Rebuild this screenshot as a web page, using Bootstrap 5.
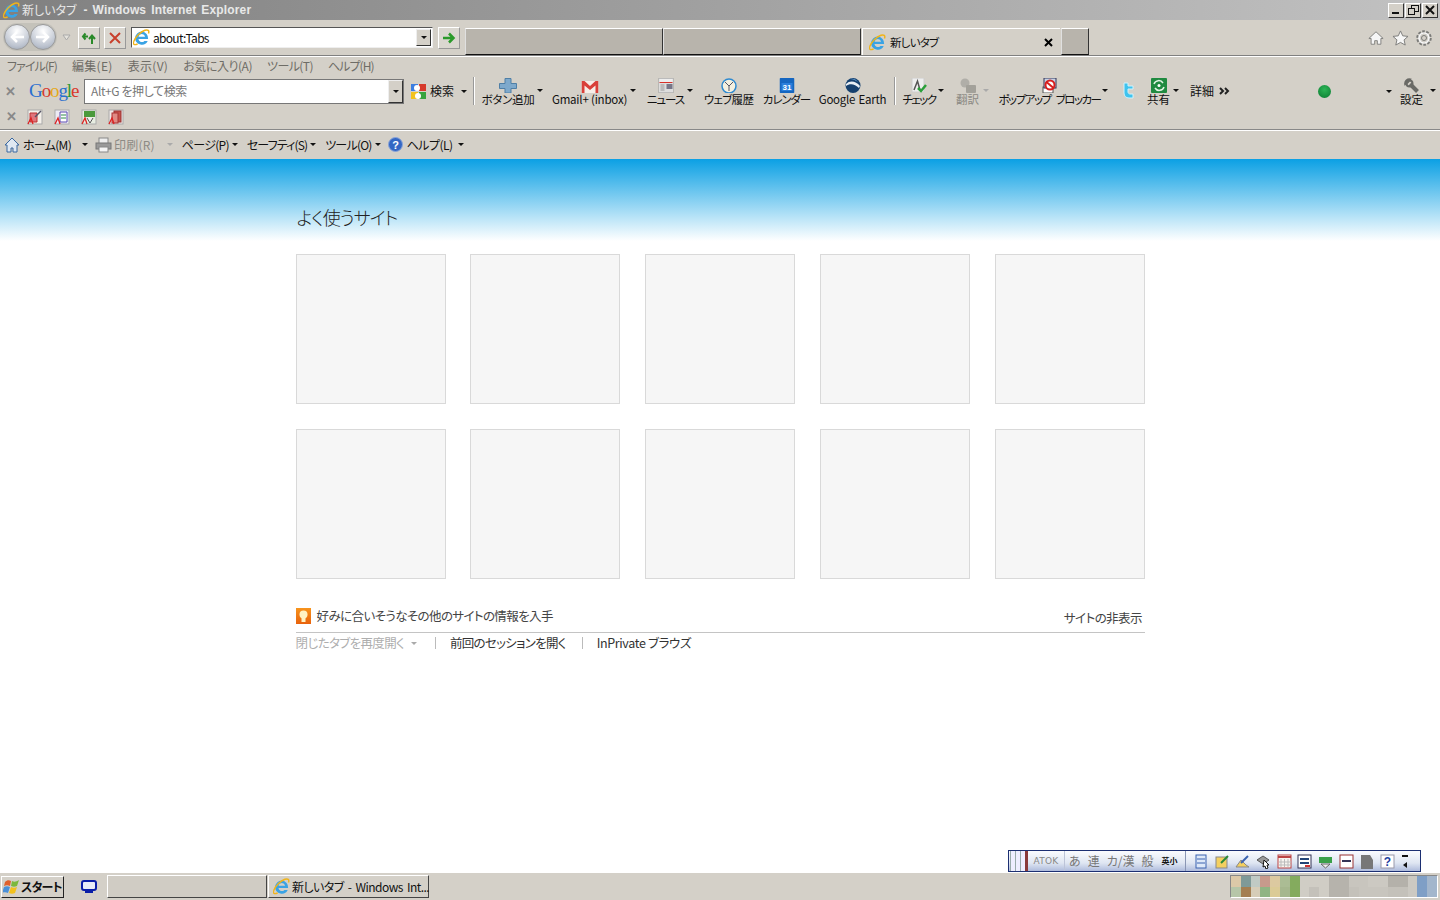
<!DOCTYPE html>
<html lang="ja"><head><meta charset="utf-8"><title>新しいタブ</title>
<link href="https://cdn.jsdelivr.net/npm/bootstrap@5.3.0/dist/css/bootstrap.min.css" rel="stylesheet">
<style>
html,body{height:100%;overflow:hidden}
body{width:1440px;height:900px;background:#fff;font-family:"Noto Sans CJK JP","Liberation Sans",sans-serif;font-feature-settings:"palt";font-size:12px;line-height:14px;color:#111;display:flex;flex-direction:column}
svg{display:block;flex:none}
.chrome{background:#d4d0c8}
.titlebar{height:20px;background:linear-gradient(90deg,#808080,#c2c2c2);color:#e8e8e8;padding-left:3px;gap:2px}
.titlebar b{font:bold 12px "Liberation Sans",sans-serif;letter-spacing:.15px;word-spacing:1.500px;white-space:pre;color:#e8e8e8}
.winbtns{margin-left:auto;margin-right:2px;gap:1px}
.winbtn{width:16px;height:15px;background:#d4d0c8;border:1px solid;border-color:#fff #333 #333 #fff;display:flex;align-items:center;justify-content:center}
.navrow{height:36px;padding-left:3px;border-bottom:1px solid #808080;position:relative}
.navcircles{width:54px;height:28px;margin-top:-1px;background:#c4c2ba;border-radius:14px;padding:1px}
.navball{width:26px;height:26px;border-radius:50%;border:1px solid #9a9a9a;background:radial-gradient(circle at 50% 25%,#fff,#bcc3cf 70%,#97a0ae);display:flex;align-items:center;justify-content:center}
.chev{margin-left:5px}
.sqbtn{width:22px;height:22px;border:1px solid;border-color:#fff #999 #999 #fff;background:#dad7d0;display:flex;align-items:center;justify-content:center}
.sq1{margin-left:7px}.sq2{margin-left:4px}.sq3{margin-left:5px}
.addr{width:302px;height:21px;margin-left:5px;background:#fff;border:1px solid;border-color:#555 #eee #eee #555;padding-left:1px;gap:3px;color:#111}
.addr span{letter-spacing:-.7px}
.ddbtn{margin-left:auto;width:15px;height:17px;margin-right:1px;background:#d4d0c8;border:1px solid;border-color:#eee #333 #333 #eee;display:flex;align-items:center;justify-content:center}
.tri{width:0;height:0;border-left:3px solid transparent;border-right:3px solid transparent;border-top:3px solid #111;flex:none}
.tri-g{border-top-color:#aaa}
.tabs{align-self:flex-end;margin-left:5px;height:27px}
.tabx{height:27px;background:#b8b4ac;border:1px solid;border-color:#fff #333 #111 #e0e0e0;width:198px}
.tabon{width:198px;height:27px;margin-left:1px;padding:0 7px 0 6px;gap:4px;background:#d4d0c8;border-top:1px solid #fff;border-left:1px solid #fff}
.tabon span{font-size:11.500px;letter-spacing:-.8px}
.tabnew{width:28px;margin-left:1px}
.rico{margin-left:auto;margin-right:8px;gap:7.500px;align-self:center}
.menurow{height:22px;padding-left:7px;border-top:1px solid #fff;color:#6e6c66;gap:15px;padding-top:2px}
.googlerow{height:26px;position:relative}
.xmark{width:10px;margin-left:5px;color:#888;font:bold 13px "Liberation Sans",sans-serif}
.glogo{margin-left:14px;width:50px;font:19px/24px "Liberation Serif",serif;letter-spacing:-1.100px}
.gb{color:#2a6fd0}.gr{color:#d8392c}.gy{color:#e6a91a}.gg{color:#2c9a3c}
.sbox{margin-left:5px;width:320px;height:25px;background:#fff;border:1px solid #777;padding-left:6px;color:#777}
.sbox span{letter-spacing:-.4px}
.sdd{margin-left:auto;width:15px;height:23px;background:#d4d0c8;border:1px solid;border-color:#eee #333 #333 #eee;display:flex;align-items:center;justify-content:center}
.gicon{margin-left:6px}
.gsearch{margin-left:3px;white-space:nowrap}
.gtri{margin-left:7px}
.sep{width:2px;height:28px;background:#999;border-right:1px solid #fff;flex:none}
.sep1{margin-left:6px}.sep2{margin-left:8px}
.tb{position:relative;height:26px;flex:none;text-align:center;white-space:nowrap}
.tb svg{position:absolute;left:50%;top:0;transform:translateX(-50%)}
.tb span{position:absolute;left:-15px;right:-15px;top:14px;line-height:14px;font-size:11.500px}
.tb .tri{position:absolute;top:11px;right:-9px}
.dim{color:#8c8a84}
.b-add{width:52px;margin-left:7px}.b-add span{letter-spacing:-.3px}
.b-gm{width:75px;margin-left:18px}.b-gm span{letter-spacing:-.2px}
.b-nw{width:37px;margin-left:20px}.b-nw span{letter-spacing:-1px}
.b-wh{width:49px;margin-left:20px}.b-wh span{letter-spacing:-.7px}
.b-cal{width:47px;margin-left:10px}.b-cal span{letter-spacing:-1.100px}
.b-ge{width:67px;margin-left:9px}.b-ge span{letter-spacing:-.25px;word-spacing:1px}
.b-ck{width:32px;margin-left:7px}.b-ck span{letter-spacing:-1.500px}
.b-tr{width:25px;margin-left:20px}
.b-pp{width:99px;margin-left:20px}.b-pp span{letter-spacing:-1.500px;word-spacing:4px}
.b-tw{width:16px;margin-left:21px}
.b-sh{width:23px;margin-left:11px}
.b-st{width:23px;margin-left:8px}.b-st .tri{right:-13px}
.more{margin-left:20px;gap:5px}
.greenwrap{margin-left:88px;width:13px;height:13px;border-radius:50%;background:radial-gradient(circle at 50% 35%,#2cb456,#0a7a30);flex:none}
.gearTri{margin-left:55px}
.linksrow{height:26px;border-bottom:1px solid #888;gap:11px}
.linksrow .xmark{margin-left:6px}
.cmdrow{height:29px;border-top:1px solid #fff;padding-left:4px;padding-bottom:1px}
.cmd{white-space:nowrap}
.m-hm{margin-left:3px;letter-spacing:-.7px}.m-a1{margin-left:11px}.m-pr{margin-left:7px}.m-g{margin-left:2px;letter-spacing:.2px}.m-a2{margin-left:12px}
.m-pg{margin-left:9px;letter-spacing:-.7px}.m-a{margin-left:3px}.m-sf{margin-left:9px;letter-spacing:-.85px}.m-tl{margin-left:9px;letter-spacing:-.8px}.m-hp{margin-left:4px;letter-spacing:-.5px}.m-qi{margin-left:7px}.m-a3{margin-left:5px}
.mm1{letter-spacing:-.9px}.mm2{letter-spacing:.3px}.mm3{letter-spacing:.3px}.mm4{letter-spacing:-.45px}.mm5{letter-spacing:-.6px}.mm6{letter-spacing:-.9px}
.page{flex:1;position:relative;background:linear-gradient(#0ba0e4,#fff);background-repeat:no-repeat;background-size:100% 82px}
.wrap{width:849.400px;margin-left:295.600px}
.head{font-size:18px;line-height:24px;letter-spacing:-1px;font-weight:300;color:#222;padding-top:46px;padding-left:1px;height:95px}
.tilegrid{display:grid;grid-template-columns:repeat(5,150px);column-gap:24.750px;row-gap:25px}
.tile{height:150px;background:#f6f6f6;border:1px solid #d9d9d9}
.sugg{margin-top:29px;height:25px;border-bottom:1px solid #c4c4c4;color:#444;font-size:12.500px;letter-spacing:-.6px}
.sugg-t{margin-top:1px}
.bulb{width:15px;height:16px;background:linear-gradient(#f7941d,#e8620c);margin-right:6px;display:flex;align-items:center;justify-content:center}
.hide{margin-left:auto;margin-right:3px;margin-top:3px;letter-spacing:-.55px}
.actions{height:20px;font-size:12.500px;color:#333}
.act-off{color:#aeaeae;letter-spacing:-.65px}
.act-tri{margin-left:7px}
.act-a{letter-spacing:-.7px}.act-b{letter-spacing:-.35px}
.vsep{width:1px;height:12px;background:#bbb;margin:0 14px 0 18px}
.vsep2{margin:0 14px 0 16px}
.atokwrap{padding-right:19px;justify-content:flex-end;position:absolute;right:0;bottom:0;left:0}
.atok{width:413px;height:22px;background:linear-gradient(#fafbfe,#dfe6f2 60%,#aebbdc);border:1px solid #1c2f72;color:#778;font-size:12px}
.gripa{width:18px;height:20px;margin-left:1px;background:repeating-linear-gradient(90deg,#9aa 0,#9aa 1px,#eef 1px,#eef 5px);border-right:3px solid #8a3a3a}
.atoklab{font:9px "DejaVu Sans",sans-serif;width:37px;text-align:center;letter-spacing:.3px;color:#888;border-right:1px solid #bcc4d8;height:20px;line-height:20px;flex:none}
.kana{padding-left:4px;gap:7px;width:121px;color:#777;height:20px;align-items:center;border-right:1px solid #8a96b4;flex:none}
.kana b{font-size:8px;color:#111;font-weight:700;white-space:nowrap;margin-left:1px}
.kana span{white-space:nowrap}
.tray{gap:5.700px;padding-left:8px}
.ti{width:15px;height:15px;flex:none}
.taskbar{height:28px;border-top:1px solid #fff;padding-left:1px;background:#d4d0c8}
.startbtn{width:63px;height:22px;font-weight:700;border:1px solid;border-color:#fff #222 #222 #fff;gap:0;padding-left:1px;white-space:nowrap;letter-spacing:-.8px}
.qlaunch{margin-left:17px;margin-right:10px}
.tbtn{height:23px;border:1px solid;border-color:#fff #444 #444 #fff}
.tbtn-a{width:160px;margin-right:1px;background:#d0ccc4}
.tbtn-b{width:161px;padding-left:4px;gap:2px;letter-spacing:-.55px;word-spacing:2px}
.tray2{margin-left:auto;margin-right:2px;width:208px;height:23px;border:1px solid;border-color:#888 #fff #fff #888;display:grid;grid-template-columns:repeat(21,1fr);grid-template-rows:repeat(2,1fr)}
</style></head><body>
<svg width="0" height="0" class="position-absolute"><defs>
<symbol id="ie" viewBox="0 0 20 20"><path d="M10.500 3a8 8 0 0 0-8 8 7.800 7.800 0 0 0 14.800 3h-3.900a4 4 0 0 1-7-2.200h11.400A8 8 0 0 0 10.500 3zM6.500 9a4 4 0 0 1 7.800 0z" fill="#3aa3e4"/><path d="M5.500 17.500C1.500 19.500-.5 18 1 14.500 3 9.500 8.500 3.500 14 1.500c3.500-1.200 5.500.3 4.200 3.800" fill="none" stroke="#f0b41a" stroke-width="1.700"/></symbol>
</defs></svg>

<div class="chrome">
 <div class="titlebar d-flex align-items-center">
  <svg width="17" height="17"><use href="#ie"/></svg>
  <span class="text-nowrap">新しいタブ</span><b> - Windows Internet Explorer</b>
  <div class="winbtns d-flex">
   <div class="winbtn"><svg width="10" height="10"><rect x="1" y="7" width="7" height="2" fill="#111"/></svg></div>
   <div class="winbtn"><svg width="11" height="10" fill="none" stroke="#111"><rect x="3.500" y=".5" width="7" height="6"/><rect x=".5" y="3.500" width="6" height="6" fill="#d4d0c8"/></svg></div>
   <div class="winbtn"><svg width="10" height="10" stroke="#111" stroke-width="2"><path d="M1 1l8 8M9 1L1 9"/></svg></div>
  </div>
 </div>

 <div class="navrow d-flex align-items-center">
  <div class="navcircles d-flex">
   <div class="navball"><svg width="16" height="14" fill="none" stroke="#fff" stroke-width="2.500"><path d="M15 7H3M8 2L3 7l5 5"/></svg></div>
   <div class="navball"><svg width="16" height="14" fill="none" stroke="#fff" stroke-width="2.500"><path d="M1 7h12M8 2l5 5-5 5"/></svg></div>
  </div>
  <svg class="chev" width="9" height="7" fill="#e4e2dc" stroke="#aaa"><path d="M1 1h7L4.500 6z"/></svg>
  <div class="sqbtn sq1"><svg width="16" height="14" stroke="#2a8a2a" stroke-width="2" fill="none"><path d="M2 5.500h5M4.500 2.500L2 5.500l2.500 3M11 13V6M8 8L11 4.500l3 3.500"/></svg></div>
  <div class="sqbtn sq2"><svg width="12" height="12" stroke="#c8402c" stroke-width="2"><path d="M1 1l10 10M11 1L1 11"/></svg></div>
  <div class="addr d-flex align-items-center">
   <svg width="17" height="17"><use href="#ie"/></svg><span>about:Tabs</span>
   <div class="ddbtn"><i class="tri"></i></div>
  </div>
  <div class="sqbtn sq3"><svg width="14" height="12" fill="none" stroke="#2a9a2a" stroke-width="2.500"><path d="M1 6h10M7 1.500L11.500 6 7 10.500"/></svg></div>
  <div class="tabs d-flex">
   <div class="tabx"></div><div class="tabx"></div>
   <div class="tabon d-flex align-items-center"><svg width="17" height="17"><use href="#ie"/></svg><span>新しいタブ</span><svg class="ms-auto" width="9" height="9" stroke="#000" stroke-width="2"><path d="M1 1l7 7M8 1L1 8"/></svg></div>
   <div class="tabx tabnew"></div>
  </div>
  <div class="rico d-flex align-items-center">
   <svg width="16" height="16" fill="#f6f6f6" stroke="#7a7a78" viewBox="0 0 18 16"><path d="M9 1L1 8.500h2.500V15h4v-4h3v4h4V8.500H17z"/></svg>
   <svg width="17" height="16" fill="#f6f6f6" stroke="#7a7a78" viewBox="0 0 18 17"><path d="M9 1l2.400 5.200 5.600.6-4.200 3.700 1.200 5.500L9 13.200 4 16l1.200-5.500L1 6.800l5.600-.6z"/></svg>
   <svg width="16" height="16" viewBox="0 0 16 16" fill="none"><circle cx="8" cy="8" r="6" stroke="#7a7a78" stroke-width="3.500" stroke-dasharray="2.400 1.300"/><circle cx="8" cy="8" r="5" stroke="#f6f6f6" stroke-width="1.700"/><circle cx="8" cy="8" r="2.500" stroke="#7a7a78"/></svg>
  </div>
 </div>

 <div class="menurow d-flex"><span class="mm1">ファイル(F)</span><span class="mm2">編集(E)</span><span class="mm3">表示(V)</span><span class="mm4">お気に入り(A)</span><span class="mm5">ツール(T)</span><span class="mm6">ヘルプ(H)</span></div>

 <div class="googlerow d-flex align-items-center">
  <span class="xmark">✕</span>
  <span class="glogo"><span class="gb">G</span><span class="gr">o</span><span class="gy">o</span><span class="gb">g</span><span class="gg">l</span><span class="gr">e</span></span>
  <div class="sbox d-flex align-items-center"><span>Alt+G を押して検索</span><div class="sdd"><i class="tri"></i></div></div>
  <svg class="gicon" width="17" height="17"><rect x="1" y="1" width="7" height="7" fill="#3b7de0"/><rect x="9" y="1" width="7" height="7" fill="#d63a2c"/><rect x="1" y="9" width="7" height="7" fill="#f2c21e"/><rect x="9" y="9" width="7" height="7" fill="#37a33f"/><circle cx="7" cy="5" r="3" fill="#fff"/><circle cx="8" cy="13" r="3" fill="#fff"/></svg>
  <span class="gsearch">検索</span><i class="tri gtri"></i>
  <div class="sep sep1"></div>

  <div class="tb b-add"><svg width="18" height="15"><path d="M6 .5h6v5h5.500v5H12V15H6v-4.500H.5v-5H6z" fill="#7ea9cc" stroke="#4f7fa6"/></svg><span>ボタン追加</span><i class="tri"></i></div>
  <div class="tb b-gm"><svg width="17" height="13" style="top:3px"><rect width="17" height="12" fill="#f6eee8"/><path d="M0 0h3l5.500 5L14 0h3v12h-3V4.500L8.500 9 3 4.500V12H0z" fill="#d9403a"/></svg><span>Gmail+ (inbox)</span><i class="tri"></i></div>
  <div class="tb b-nw"><svg width="15" height="15"><rect width="15" height="15" fill="#ddd" stroke="#999"/><rect x="1" y="1" width="13" height="3" fill="#eee"/><rect x="1" y="4" width="13" height="1" fill="#d8322a"/><rect x="8" y="6" width="6" height="5" fill="#778"/><rect x="2" y="6" width="4" height="7" fill="#bbb"/></svg><span>ニュース</span><i class="tri"></i></div>
  <div class="tb b-wh"><svg width="16" height="15"><circle cx="8" cy="8" r="7" fill="#f4f0e0" stroke="#2f8ad0" stroke-width="1.500"/><path d="M4 4l4 4 4-4M8 8v5" fill="none" stroke="#556"/></svg><span>ウェブ履歴</span></div>
  <div class="tb b-cal"><svg width="15" height="15"><rect width="15" height="15" rx="1" fill="#1566c0"/><rect x="2" y="5" width="11" height="8" fill="#2a7fdc"/><text x="7.500" y="12" font-size="8" font-weight="700" text-anchor="middle" fill="#fff" font-family="Liberation Sans">31</text></svg><span>カレンダー</span></div>
  <div class="tb b-ge"><svg width="16" height="15"><circle cx="8" cy="7.500" r="7.500" fill="#16406e"/><path d="M1 6C5 2 11 3 15 8l-1 2C10 6 5 5 1 8z" fill="#e8eef4"/><path d="M5 1c3-1 6 0 8 3-3-2-5-3-8-3z" fill="#6aa4d8"/></svg><span>Google Earth</span></div>
  <div class="sep sep2"></div>
  <div class="tb b-ck"><svg width="16" height="15"><rect x="1" width="12" height="14" fill="#eee" stroke="#ccc"/><path d="M3 12L6.500 3 9 12" fill="none" stroke="#555" stroke-width="1.500"/><path d="M7 10l3 3 5-6" fill="none" stroke="#2aa03a" stroke-width="2.500"/></svg><span>チェック</span><i class="tri"></i></div>
  <div class="tb b-tr dim"><svg width="16" height="15"><circle cx="5" cy="5" r="4.500" fill="#b0aea8"/><rect x="6" y="7" width="10" height="8" rx="1" fill="#a3a19a"/></svg><span>翻訳</span><i class="tri tri-g"></i></div>
  <div class="tb b-pp"><svg width="16" height="15"><rect x="1" y="9" width="10" height="6" fill="#fff" stroke="#555"/><rect x="2" width="12" height="10" fill="#c4d2e6" stroke="#335"/><circle cx="8" cy="7" r="4.500" fill="#fff" stroke="#d81e1e" stroke-width="2"/><path d="M4.500 4l7 6" stroke="#d81e1e" stroke-width="2"/></svg><span>ポップアップ ブロッカー</span><i class="tri"></i></div>
  <div class="tb b-tw"><svg width="14" height="18" style="top:4px"><path d="M3 1h4v3h5v3H7v3c0 1 1 2 2 2h3v4H8c-3 0-5-2-5-5z" fill="#3fc3ee" stroke="#d0f2fc"/></svg></div>
  <div class="tb b-sh"><svg width="16" height="15"><rect width="16" height="15" rx="1" fill="#1f8a40"/><path d="M3 6a5 5 0 0 1 9-1M13 9a5 5 0 0 1-9 1" fill="none" stroke="#e0f4e4" stroke-width="1.500"/><circle cx="8" cy="7.500" r="1.500" fill="#fff"/></svg><span>共有</span><i class="tri"></i></div>
  <div class="more d-flex align-items-center"><span class="text-nowrap">詳細</span><svg width="11" height="8" fill="none" stroke="#222" stroke-width="2"><path d="M1 1l3 3-3 3M6 1l3 3-3 3"/></svg></div>
  <div class="greenwrap"></div>
  <i class="tri gearTri"></i>
  <div class="tb b-st"><svg width="16" height="15" fill="none" stroke="#6a6a66"><path d="M6 6l7.500 7.500" stroke-width="4"/><path d="M6.500 1.200A4.500 4.500 0 0 0 1 6.500L4 4.500z" fill="#6a6a66" stroke-width="1.500"/><circle cx="5.500" cy="5.500" r="3" stroke-width="2"/></svg><span>設定</span><i class="tri"></i></div>
 </div>

 <div class="linksrow d-flex align-items-center">
  <span class="xmark">✕</span>
  <svg width="16" height="16"><rect x="1" y="1" width="14" height="14" fill="#f4f0ea" stroke="#aaa"/><path d="M3 4h7v9H3z" fill="#e0747c" stroke="#b33"/><path d="M8 8l6-6" stroke="#556" stroke-width="1.500"/><path d="M1 15l3-6 2 6" fill="none" stroke="#d22" stroke-width="1.300"/></svg>
  <svg width="16" height="16"><rect x="1" y="1" width="14" height="14" fill="#eceaf4" stroke="#aaa"/><path d="M6 3h7v10H6z" fill="#fff" stroke="#5a4ab0"/><path d="M7 6h5M7 9h5" stroke="#2c8a4a"/><path d="M1 15l3-6 2 6" fill="none" stroke="#d22" stroke-width="1.300"/></svg>
  <svg width="16" height="16"><rect x="1" y="1" width="14" height="14" fill="#e8eee2" stroke="#aaa"/><rect x="3" y="2" width="11" height="6" fill="#4a9a3c"/><path d="M6 9l3 5 3-5" fill="#eee" stroke="#555"/><path d="M1 15l3-6 2 6" fill="none" stroke="#d22" stroke-width="1.300"/></svg>
  <svg width="16" height="16"><rect x="1" y="1" width="14" height="14" fill="#f0e8e6" stroke="#aaa"/><rect x="6" y="2" width="7" height="11" fill="#c8544c" stroke="#933"/><rect x="4" y="4" width="6" height="10" fill="#e08a84" stroke="#a33"/><path d="M1 15l3-6 2 6" fill="none" stroke="#d22" stroke-width="1.300"/></svg>
 </div>

 <div class="cmdrow d-flex align-items-center">
  <svg width="16" height="16"><path d="M8 1L1 8h2v7h4v-4h2v4h4V8h2z" fill="#dfe8f2" stroke="#3a68a0"/></svg>
  <span class="cmd m-hm">ホーム(M)</span><i class="tri m-a1"></i>
  <svg class="m-pr" width="17" height="16"><rect x="4" y="1" width="9" height="6" fill="#eee" stroke="#888"/><rect x="1" y="6" width="15" height="6" fill="#999" stroke="#777"/><rect x="4" y="10" width="9" height="5" fill="#f4f4f4" stroke="#888"/></svg>
  <span class="cmd m-g dim">印刷(R)</span><i class="tri tri-g m-a2"></i>
  <span class="cmd m-pg">ページ(P)</span><i class="tri m-a"></i>
  <span class="cmd m-sf">セーフティ(S)</span><i class="tri m-a"></i>
  <span class="cmd m-tl">ツール(O)</span><i class="tri m-a"></i>
  <svg class="m-qi" width="15" height="15"><circle cx="7.500" cy="7.500" r="7" fill="#3467c4" stroke="#8aa4d8"/><text x="7.500" y="11.500" font-size="11" font-weight="700" text-anchor="middle" fill="#fff" font-family="Liberation Sans">?</text></svg>
  <span class="cmd m-hp">ヘルプ(L)</span><i class="tri m-a3"></i>
 </div>
</div>

<main class="page">
 <div class="wrap">
  <div class="head">よく使うサイト</div>
  <div class="tilegrid">
   <div class="tile"></div><div class="tile"></div><div class="tile"></div><div class="tile"></div><div class="tile"></div>
   <div class="tile"></div><div class="tile"></div><div class="tile"></div><div class="tile"></div><div class="tile"></div>
  </div>
  <div class="sugg d-flex align-items-start">
   <div class="bulb"><svg width="9" height="13"><circle cx="4.500" cy="4.500" r="4" fill="#fff3c4"/><rect x="2.500" y="8" width="4" height="4" fill="#fff3c4"/></svg></div>
   <span class="sugg-t">好みに合いそうなその他のサイトの情報を入手</span><span class="hide">サイトの非表示</span>
  </div>
  <div class="actions d-flex align-items-center">
   <span class="act-off">閉じたタブを再度開く</span><i class="tri tri-g act-tri"></i><i class="vsep"></i><span class="act-a">前回のセッションを開く</span><i class="vsep vsep2"></i><span class="act-b">InPrivate ブラウズ</span>
  </div>
 </div>
 <div class="atokwrap d-flex">
  <div class="atok d-flex align-items-center">
   <div class="gripa"></div><div class="atoklab">ATOK</div>
   <div class="kana d-flex"><span>あ</span><span>連</span><span>カ/漢</span><span>般</span><b>英小</b></div>
   <div class="tray d-flex align-items-center">
    <svg class="ti"><rect x="2" y="1" width="10" height="13" fill="#dde8f8" stroke="#3a62b0"/><path d="M3 5h8M3 9h8" stroke="#3a62b0"/></svg>
    <svg class="ti"><rect x="1" y="3" width="11" height="11" fill="#f4d060" stroke="#888"/><path d="M6 9l7-7" stroke="#2a8a3a" stroke-width="2"/></svg>
    <svg class="ti"><path d="M1 13l5-7 5 5 3 2z" fill="#f4d060" stroke="#888"/><path d="M6 9l7-7" stroke="#3a62b0" stroke-width="2"/></svg>
    <svg class="ti"><path d="M1 6l6-4 6 4-6 4z" fill="#999" stroke="#555"/><path d="M8 6l5 5-2 0 1 3-2 1-1-3-2 1z" fill="#fff" stroke="#111"/></svg>
    <svg class="ti"><rect x="1" y="1" width="13" height="13" fill="#f8f4f0" stroke="#b44"/><path d="M1 3h13" stroke="#b44" stroke-width="2"/><path d="M4 5v8M7.500 5v8M11 5v8M2 8h12M2 11h12" stroke="#bbb"/></svg>
    <svg class="ti"><rect x="1" y="1" width="13" height="13" fill="#fff" stroke="#335"/><path d="M3 5h9M3 9h9" stroke="#247" stroke-width="2"/><path d="M8 12h5" stroke="#c33" stroke-width="2"/></svg>
    <svg class="ti"><path d="M1 3h13v6H1z" fill="#3aa04a"/><path d="M3 10l4.500 4L12 10z" fill="#eee" stroke="#666"/></svg>
    <svg class="ti"><rect x="1" y="1" width="13" height="13" fill="#fff" stroke="#933"/><path d="M3 7h9" stroke="#335" stroke-width="2"/></svg>
    <svg class="ti"><path d="M1 1h9l3 5v9H1z" fill="#777"/></svg>
    <svg class="ti"><rect x="1" y="1" width="13" height="13" fill="#fff" stroke="#99a"/><text x="7.500" y="12" font-size="12" font-weight="700" text-anchor="middle" fill="#1d3fa0" font-family="Liberation Sans">?</text></svg>
    <svg width="8" height="15"><rect x="1" y="1" width="6" height="2" fill="#111"/><path d="M6 8v6L2 11z" fill="#111"/></svg>
   </div>
  </div>
 </div>
</main>

<footer class="taskbar d-flex align-items-center">
 <div class="startbtn d-flex align-items-center"><svg width="18" height="17" viewBox="0 0 18 17"><path d="M2 4c2-2 4-2 6-1L7 8C5 7 3 7 1 8z" fill="#e0602c"/><path d="M9 3c2 1 4 1 7-1l-2 6c-2 1-4 1-6 0z" fill="#7cb83c"/><path d="M1 9c2-1 4-1 6 0l-2 6c-2-1-4-1-6 0z" fill="#4a90d8"/><path d="M8 9c2 1 4 1 6 0l-2 6c-2 1-4 1-6 0z" fill="#f2c11e"/></svg><span>スタート</span></div>
 <svg class="qlaunch" width="16" height="14" fill="none"><rect x="1" y="1" width="14" height="9" rx="2" stroke="#0a1ea8" stroke-width="2" fill="#e8ecf8"/><path d="M4 12h8" stroke="#0a1ea8" stroke-width="2"/></svg>
 <div class="tbtn tbtn-a"></div>
 <div class="tbtn tbtn-b d-flex align-items-center"><svg width="17" height="17"><use href="#ie"/></svg><span class="text-nowrap">新しいタブ - Windows Int...</span></div>
 <div class="tray2" id="tray2"></div>
</footer>
<script src="https://cdn.jsdelivr.net/npm/bootstrap@5.3.0/dist/js/bootstrap.bundle.min.js"></script>
<script>
var c=["#dcc9a8","#7f9a98","#c0cac4","#c79a8c","#dcc9a0","#abbc94","#84ab5e","#d0cdc5","#d0cdc5","#d0cdc5","#b6b3ac","#b6b3ac","#c8c5be","#c8c5be","#ccc9c2","#ccc9c2","#b4b1aa","#b4b1aa","#ccc9c2","#7f9fc6","#a3b6cc",
"#b6c6a8","#a47f52","#d6cdb8","#90b483","#dbcb96","#a6b78e","#84ab5e","#d0cdc5","#c4c1ba","#d0cdc5","#b6b3ac","#b6b3ac","#c4c1ba","#c8c5be","#c8c5be","#c8c5be","#c4c1ba","#c4c1ba","#ccc9c2","#7f9fc6","#a3b6cc"];
c.forEach(function(k){var d=document.createElement('div');d.style.background=k;document.getElementById('tray2').appendChild(d);});
</script>
</body></html>
